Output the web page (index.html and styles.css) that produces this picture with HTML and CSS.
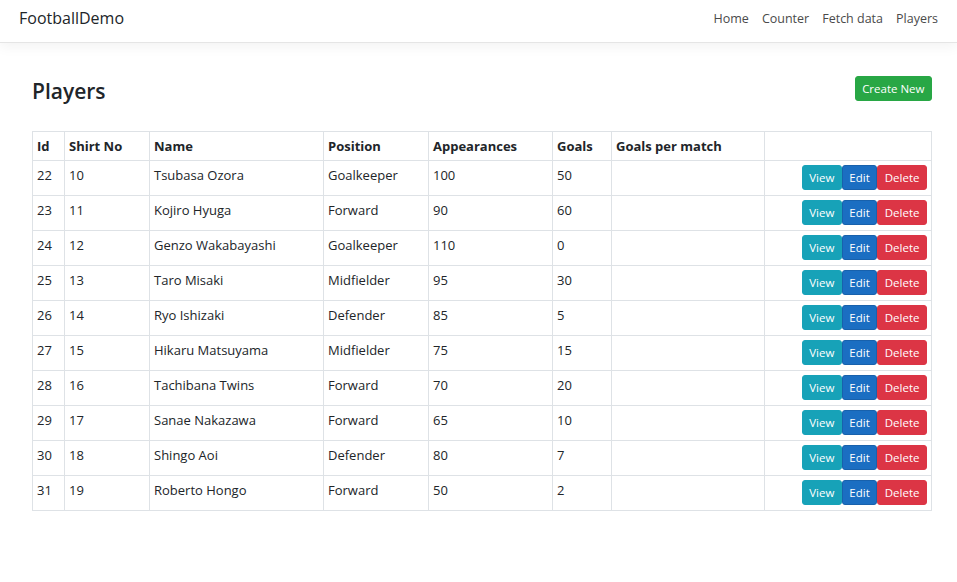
FILE: index.html
```html
<!DOCTYPE html>
<html>
<head>
<meta charset="utf-8">
<link rel="stylesheet" href="styles.css">
</head>
<body>
<header class="navbar">
  <a class="brand">FootballDemo</a>
  <nav class="nav">
    <a>Home</a>
    <a>Counter</a>
    <a>Fetch data</a>
    <a>Players</a>
  </nav>
</header>
<main class="content">
  <div class="title-row">
    <h1>Players</h1>
    <button class="btn btn-success">Create New</button>
  </div>
  <table class="table">
    <thead>
      <tr>
        <th class="c-id">Id</th>
        <th class="c-shirt">Shirt No</th>
        <th class="c-name">Name</th>
        <th class="c-pos">Position</th>
        <th class="c-app">Appearances</th>
        <th class="c-goals">Goals</th>
        <th class="c-gpm">Goals per match</th>
        <th class="c-act"></th>
      </tr>
    </thead>
    <tbody>
      <tr><td>22</td><td>10</td><td>Tsubasa Ozora</td><td>Goalkeeper</td><td>100</td><td>50</td><td></td><td class="act"><div class="btns"><button class="btn btn-info">View</button><button class="btn btn-primary">Edit</button><button class="btn btn-danger">Delete</button></div></td></tr>
      <tr><td>23</td><td>11</td><td>Kojiro Hyuga</td><td>Forward</td><td>90</td><td>60</td><td></td><td class="act"><div class="btns"><button class="btn btn-info">View</button><button class="btn btn-primary">Edit</button><button class="btn btn-danger">Delete</button></div></td></tr>
      <tr><td>24</td><td>12</td><td>Genzo Wakabayashi</td><td>Goalkeeper</td><td>110</td><td>0</td><td></td><td class="act"><div class="btns"><button class="btn btn-info">View</button><button class="btn btn-primary">Edit</button><button class="btn btn-danger">Delete</button></div></td></tr>
      <tr><td>25</td><td>13</td><td>Taro Misaki</td><td>Midfielder</td><td>95</td><td>30</td><td></td><td class="act"><div class="btns"><button class="btn btn-info">View</button><button class="btn btn-primary">Edit</button><button class="btn btn-danger">Delete</button></div></td></tr>
      <tr><td>26</td><td>14</td><td>Ryo Ishizaki</td><td>Defender</td><td>85</td><td>5</td><td></td><td class="act"><div class="btns"><button class="btn btn-info">View</button><button class="btn btn-primary">Edit</button><button class="btn btn-danger">Delete</button></div></td></tr>
      <tr><td>27</td><td>15</td><td>Hikaru Matsuyama</td><td>Midfielder</td><td>75</td><td>15</td><td></td><td class="act"><div class="btns"><button class="btn btn-info">View</button><button class="btn btn-primary">Edit</button><button class="btn btn-danger">Delete</button></div></td></tr>
      <tr><td>28</td><td>16</td><td>Tachibana Twins</td><td>Forward</td><td>70</td><td>20</td><td></td><td class="act"><div class="btns"><button class="btn btn-info">View</button><button class="btn btn-primary">Edit</button><button class="btn btn-danger">Delete</button></div></td></tr>
      <tr><td>29</td><td>17</td><td>Sanae Nakazawa</td><td>Forward</td><td>65</td><td>10</td><td></td><td class="act"><div class="btns"><button class="btn btn-info">View</button><button class="btn btn-primary">Edit</button><button class="btn btn-danger">Delete</button></div></td></tr>
      <tr><td>30</td><td>18</td><td>Shingo Aoi</td><td>Defender</td><td>80</td><td>7</td><td></td><td class="act"><div class="btns"><button class="btn btn-info">View</button><button class="btn btn-primary">Edit</button><button class="btn btn-danger">Delete</button></div></td></tr>
      <tr><td>31</td><td>19</td><td>Roberto Hongo</td><td>Forward</td><td>50</td><td>2</td><td></td><td class="act"><div class="btns"><button class="btn btn-info">View</button><button class="btn btn-primary">Edit</button><button class="btn btn-danger">Delete</button></div></td></tr>
    </tbody>
  </table>
</main>
</body>
</html>
```

FILE: styles.css
```css
* { box-sizing: border-box; }
html, body { margin: 0; padding: 0; }
body {
  font-family: "Open Sans", "Noto Sans", sans-serif;
  font-size: 13px;
  line-height: 21px;
  color: #212529;
  background: #fff;
}
.navbar {
  height: 43px;
  display: flex;
  align-items: center;
  justify-content: space-between;
  padding: 0 19px 0 19px;
  border-bottom: 1px solid #e5e5e5;
  box-shadow: 0 4px 12px rgba(0,0,0,0.05);
}
.brand {
  font-size: 16px;
  color: #212529;
  padding-bottom: 5px;
}
.nav { display: flex; gap: 0; }
.nav a {
  color: #4a4a4a;
  font-size: 12.5px;
  padding: 0 6.5px 5px 6.5px;
}
.nav a:last-child { padding-right: 0; }
.content {
  padding: 33px 25px 0 32px;
}
.title-row {
  display: flex;
  justify-content: space-between;
  align-items: flex-start;
  height: 55px;
}
.title-row h1 {
  margin: 0;
  font-size: 21px;
  font-weight: 600;
  line-height: 30px;
}
.btn {
  font-family: inherit;
  border: 1px solid transparent;
  color: #fff;
  font-size: 11.5px;
  line-height: 18px;
  padding: 3px 6.5px;
  border-radius: 3px;
  cursor: pointer;
}
.btn-success { background: #28a745; border-color: #28a745; height: 25px; }
.btn-info { background: #17a2b8; border-color: #17a2b8; }
.btn-primary { background: #1b6ec2; border-color: #1861ac; }
.btn-danger { background: #dc3545; border-color: #dc3545; }
.table {
  width: 900px;
  border-collapse: collapse;
}
.table th, .table td {
  border: 1px solid #dee2e6;
  text-align: left;
  vertical-align: top;
}
.table th { font-weight: 700; padding: 4px 4px 3px 4px; }
.table td { padding: 4px 4px 4px 4px; height: 35px; }
.c-id { width: 32px; }
.c-shirt { width: 85px; }
.c-name { width: 174px; }
.c-pos { width: 105px; }
.c-app { width: 124px; }
.c-goals { width: 59px; }
.c-gpm { width: 153px; }
.table td.act { padding: 4px 4px 4px 4px; }
.btns { display: flex; justify-content: flex-end; gap: 0; }
.btns .btn { height: 25px; }
```
